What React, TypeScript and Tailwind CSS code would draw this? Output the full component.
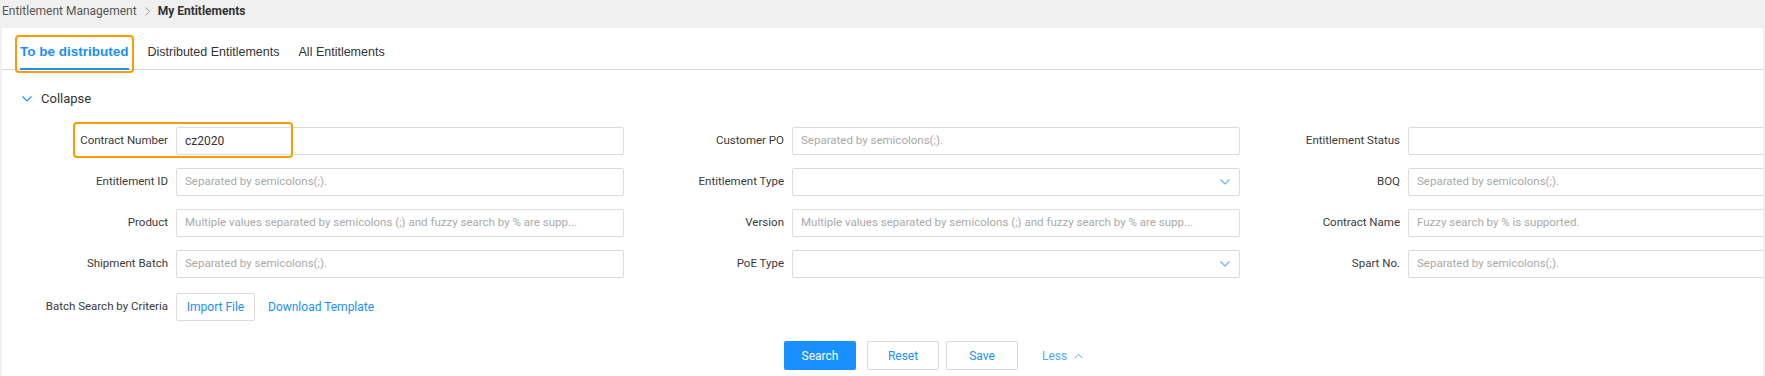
import React from "react";

const FONT = { fontFamily: "Roboto, 'Liberation Sans', Arial, sans-serif" };

function Chevron({ className }: { className?: string }) {
  return (
    <svg viewBox="0 0 10 6" className={className} fill="none">
      <path d="M0.5 0.5 L5 5 L9.5 0.5" stroke="currentColor" strokeWidth="1.1" />
    </svg>
  );
}

type Field = {
  label: string;
  value?: string;
  placeholder?: string;
  select?: boolean;
  highlight?: boolean;
};

function FieldCell({ f }: { f: Field }) {
  return (
    <div className="relative flex items-center">
      {f.highlight && (
        <span className="pointer-events-none absolute left-[35px] top-[-5px] h-[36px] w-[220px] rounded-[4px] border-2 border-[#ff9a00]" />
      )}
      <div className="w-[130px] shrink-0 text-right text-[11.5px] text-[#3a3a3a]">{f.label}</div>
      <div className="ml-[8px] flex h-[28px] w-[448px] shrink-0 items-center justify-between overflow-hidden rounded-[2px] border border-[#dcdcdc] bg-white pl-[8px] pr-[9px]">
        {f.value ? (
          <span className="text-[12px] text-[#333]">{f.value}</span>
        ) : (
          <span className="overflow-hidden whitespace-nowrap text-[11.5px] text-[#aaa]">{f.placeholder ?? ""}</span>
        )}
        {f.select && <Chevron className="h-[6px] w-[10px] shrink-0 text-[#6aaef0]" />}
      </div>
    </div>
  );
}

const SEP = "Separated by semicolons(;).";
const MULTI = "Multiple values separated by semicolons (;) and fuzzy search by % are supp...";

const rows: Field[][] = [
  [
    { label: "Contract Number", value: "cz2020", highlight: true },
    { label: "Customer PO", placeholder: SEP },
    { label: "Entitlement Status" },
  ],
  [
    { label: "Entitlement ID", placeholder: SEP },
    { label: "Entitlement Type", select: true },
    { label: "BOQ", placeholder: SEP },
  ],
  [
    { label: "Product", placeholder: MULTI },
    { label: "Version", placeholder: MULTI },
    { label: "Contract Name", placeholder: "Fuzzy search by % is supported." },
  ],
  [
    { label: "Shipment Batch", placeholder: SEP },
    { label: "PoE Type", select: true },
    { label: "Spart No.", placeholder: SEP },
  ],
];

export default function App() {
  return (
    <div className="h-[376px] w-[1765px] overflow-hidden bg-[#f0f0f0]" style={FONT}>
      {/* breadcrumb */}
      <div className="flex h-[28px] items-start pl-[2px] pt-[4px] text-[12px] leading-[14px]">
        <span className="text-[#555]">Entitlement Management</span>
        <svg viewBox="0 0 5 9" className="mx-[8px] mt-[3px] h-[9px] w-[5px]" fill="none">
          <path d="M0.5 0.5 L4.5 4.5 L0.5 8.5" stroke="#999" strokeWidth="1" />
        </svg>
        <span className="font-bold text-[#333]">My Entitlements</span>
      </div>

      {/* main panel */}
      <div className="mx-[2px] h-[348px] overflow-hidden bg-white">
        {/* tabs */}
        <div
          className="flex h-[42px] gap-[19px] border-b border-[#d8d8d8] pl-[18px] text-[12.5px]"
          style={{ fontFamily: "'Liberation Sans', Arial, sans-serif" }}
        >
          <div className="relative flex items-center pt-[7px] text-[13.5px] font-bold text-[#1890ff]">
            <span>To be distributed</span>
            <span className="absolute bottom-[-1px] left-0 right-0 h-[2px] bg-[#1890ff]" />
            <span className="pointer-events-none absolute bottom-[-4px] left-[-5px] right-[-5px] top-[7px] rounded-[4px] border-2 border-[#ff9a00]" />
          </div>
          <div className="flex items-center pt-[7px] text-[#333]">Distributed Entitlements</div>
          <div className="flex items-center pt-[7px] text-[#333]">All Entitlements</div>
        </div>

        {/* collapse */}
        <div className="mt-[18px] flex h-[22px] items-center pl-[20px]">
          <Chevron className="h-[6px] w-[10px] text-[#1890ff]" />
          <span className="ml-[9px] text-[13px] text-[#333]">Collapse</span>
        </div>

        {/* form */}
        <div className="mt-[17px] grid grid-cols-[586px_586px_586px] gap-x-[30px] gap-y-[13px] pl-[36px]">
          {rows.flat().map((f, i) => (
            <FieldCell key={i} f={f} />
          ))}
          <div className="mt-[2px] flex items-center">
            <div className="w-[130px] shrink-0 text-right text-[11.5px] text-[#3a3a3a]">Batch Search by Criteria</div>
            <button className="ml-[8px] h-[28px] w-[79px] rounded-[2px] border border-[#dcdcdc] bg-white text-[12px] text-[#1890ff]">
              Import File
            </button>
            <span className="ml-[13px] text-[12px] text-[#1890ff]">Download Template</span>
          </div>
        </div>

        {/* actions */}
        <div className="mt-[20px] flex items-center pl-[782px] text-[12px]">
          <button className="h-[29px] w-[72px] rounded-[2px] bg-[#1890ff] text-white">Search</button>
          <button className="ml-[11px] h-[29px] w-[72px] rounded-[2px] border border-[#d9d9d9] bg-white text-[#1890ff]">
            Reset
          </button>
          <button className="ml-[7px] h-[29px] w-[72px] rounded-[2px] border border-[#d9d9d9] bg-white text-[#1890ff]">
            Save
          </button>
          <div className="ml-[24px] flex items-center text-[#5aa5f5]">
            <span>Less</span>
            <Chevron className="ml-[7px] h-[6px] w-[9px] rotate-180" />
          </div>
        </div>
      </div>
    </div>
  );
}
